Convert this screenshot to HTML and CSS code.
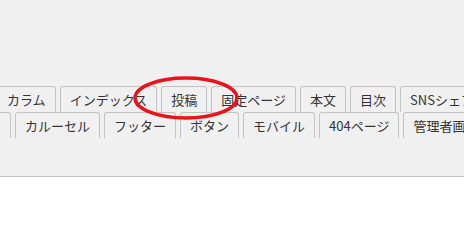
FILE: index.html
```html
<!DOCTYPE html>
<html>
  <head>
    <title>設定タブ</title>
    <link rel="stylesheet" href="styles.css">
  </head>
  <body>

    <div class="admin-head">
      <ul class="tabs first-row">
        <li class="tab">カラム</li>
        <li class="tab">インデックス</li>
        <li class="tab">投稿</li>
        <li class="tab">固定ページ</li>
        <li class="tab">本文</li>
        <li class="tab">目次</li>
        <li class="tab">SNSシェア</li>
      </ul>
      <ul class="tabs second-row">
        <li class="tab">ヘッダー</li>
        <li class="tab">カルーセル</li>
        <li class="tab">フッター</li>
        <li class="tab">ボタン</li>
        <li class="tab">モバイル</li>
        <li class="tab">404ページ</li>
        <li class="tab">管理者画面</li>
      </ul>

      <!-- red marker drawn around the 投稿 tab -->
      <svg class="marker" width="108" height="46" viewBox="0 0 108 46">
        <ellipse cx="54" cy="22" rx="51" ry="20" fill="none" stroke="#e8141a" stroke-width="3.5" />
      </svg>
    </div>

    <div class="content"></div>

  </body>
</html>
```

FILE: styles.css
```css
html {
  background-color: #ffffff;
}

body {
  margin: 0;
  overflow: hidden;
  font-family: "Noto Sans CJK JP", "Noto Sans", sans-serif;
  font-size: 13px;
  color: #333333;
}

.admin-head {
  position: relative;
  height: 177px;
  padding-top: 86px;
  box-sizing: border-box;
  background-color: #f0f0f0;
  border-bottom: 1px solid #c3c3c3;
}

.tabs {
  display: flex;
  gap: 4px;
  margin: 0;
  padding: 0;
  list-style: none;
  white-space: nowrap;
}

.first-row {
  margin-left: -3px;
}

.second-row {
  margin-left: -61px;
}

.tab {
  flex: none;
  padding: 0 9px;
  line-height: 25px;
  background-color: #f0f0f0;
  border: 1px solid #c3c3c3;
  border-bottom: 0;
  border-radius: 3px 3px 0 0;
}

.marker {
  position: absolute;
  left: 132px;
  top: 76px;
}

.content {
  height: 60px;
}
```
